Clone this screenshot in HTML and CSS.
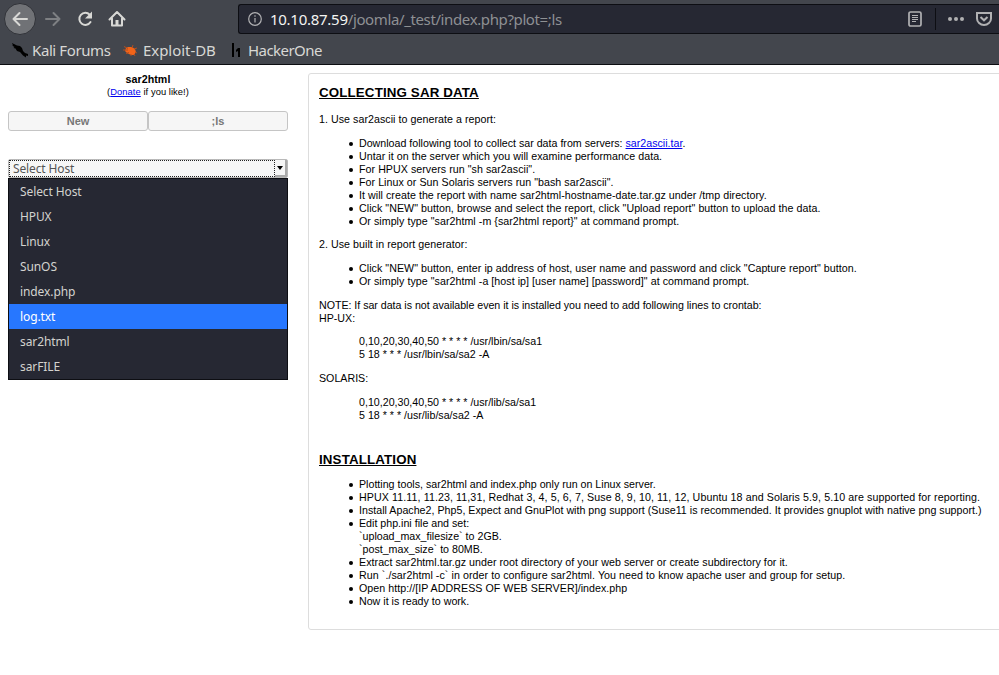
FILE: index.html
```html
<!DOCTYPE html>
<html lang="en">
<head>
<meta charset="utf-8">
<title>sar2html</title>
<link rel="stylesheet" href="styles.css">
</head>
<body>
<header class="browser">
  <div class="toolbar">
    <nav class="nav">
      <span class="back"><svg width="18" height="18" viewBox="0 0 18 18"><path d="M16 9H2.500M8.500 3L2.500 9l6 6"/></svg></span>
      <svg class="forward" width="18" height="18" viewBox="0 0 18 18"><path d="M2 9h13.500M9.500 3l6 6-6 6"/></svg>
      <svg class="reload" width="18" height="18" viewBox="0 0 18 18"><path d="M13.700 4.700A6 6 0 1 0 14.500 12"/><path class="solid" d="M16 1.500v7H9z"/></svg>
      <svg class="home" width="18" height="18" viewBox="0 0 18 18"><path d="M1.500 9.500L9 2l7.500 7.500M4 8.500v7h10v-7"/><path class="solid" d="M7.500 10h3v6h-3z"/></svg>
    </nav>
    <div class="address">
      <svg class="info" width="16" height="16" viewBox="0 0 16 16"><circle cx="8" cy="8" r="6.300"/><path d="M8 7v4.500M8 4.200v1.600"/></svg>
      <span class="url"><b>10.10.87.59</b>/joomla/_test/index.php?plot=;ls</span>
      <svg class="reader" width="16" height="18" viewBox="0 0 16 18"><rect x="2" y="2" width="12" height="14" rx="1.500"/><path d="M5 5.500h6M5 7.500h6M5 9.500h6M5 11.500h4"/></svg>
      <i class="divider"></i>
      <svg class="dots" width="18" height="6" viewBox="0 0 18 6"><circle cx="3" cy="3" r="2"/><circle cx="9" cy="3" r="2"/><circle cx="15" cy="3" r="2"/></svg>
      <svg class="pocket" width="18" height="16" viewBox="0 0 18 16"><path d="M2 2h14v5.500a7 6.500 0 0 1-14 0z"/><path d="M5.500 6L9 9.300 12.500 6"/></svg>
    </div>
  </div>
  <div class="bookmarks">
    <span class="mark"><svg width="18" height="18" viewBox="0 0 18 18"><path d="M1 2l5 2.500 3 .5 2 2 1 3 2 2 3 1v2l-2-.5v2l-3-2-3-3.500-3-1-1.500-2.500-2-.5 1-1-2.500-1.500h1z" fill="#000"/></svg>Kali Forums</span>
    <span class="mark exploit"><svg width="16" height="14" viewBox="0 0 16 14"><path d="M3 5l2-1 4 0 3 2 1 3-2 3-3 0-4-2-2-2z" fill="#f26419"/><path d="M1 3.500l4 2M0 7h5M3 10.500l3-1M9 5l1-3M11 6l3-1M12 9l2 1M8 11l0 2M11 11l1 2" stroke="#b34e20"/></svg>Exploit-DB</span>
    <span class="mark hacker"><svg width="10" height="16" viewBox="0 0 10 16"><path d="M0 1h2v14H0zM6 6h2v9H6V9L4 10V8z" fill="#000"/></svg>HackerOne</span>
  </div>
</header>
<main class="page">
  <aside class="side">
    <div class="brand">sar2html</div>
    <div class="donate">(<a href="#">Donate</a> if you like!)</div>
    <div class="buttons"><button>New</button><button>;ls</button></div>
    <div class="select"><span class="value">Select Host</span><span class="arrow"></span></div>
    <ul class="menu">
      <li>Select Host</li><li>HPUX</li><li>Linux</li><li>SunOS</li><li>index.php</li><li class="active">log.txt</li><li>sar2html</li><li>sarFILE</li>
    </ul>
  </aside>
  <section class="content">
    <h2>COLLECTING SAR DATA</h2>
    <p class="loose">1. Use sar2ascii to generate a report:</p>
    <ul>
      <li>Download following tool to collect sar data from servers: <a href="#">sar2ascii.tar</a>.</li>
      <li class="loose">Untar it on the server which you will examine performance data.</li>
      <li class="loose">For HPUX servers run "sh sar2ascii".</li>
      <li class="loose">For Linux or Sun Solaris servers run "bash sar2ascii".</li>
      <li class="loose">It will create the report with name sar2html-hostname-date.tar.gz under /tmp directory.</li>
      <li class="loose">Click "NEW" button, browse and select the report, click "Upload report" button to upload the data.</li>
      <li class="loose">Or simply type "sar2html -m {sar2html report}" at command prompt.</li>
    </ul>
    <p class="loose">2. Use built in report generator:</p>
    <ul class="second">
      <li class="loose">Click "NEW" button, enter ip address of host, user name and password and click "Capture report" button.</li>
      <li class="loose">Or simply type "sar2html -a [host ip] [user name] [password]" at command prompt.</li>
    </ul>
    <p class="note"><span class="tight">NOTE: If sar data is not available even it is installed you need to add following lines to crontab:</span><br>HP-UX:</p>
    <blockquote>0,10,20,30,40,50 * * * * /usr/lbin/sa/sa1<br>5 18 * * * /usr/lbin/sa/sa2 -A</blockquote>
    <p>SOLARIS:</p>
    <blockquote class="solaris">0,10,20,30,40,50 * * * * /usr/lib/sa/sa1<br>5 18 * * * /usr/lib/sa/sa2 -A</blockquote>
    <h2 class="install">INSTALLATION</h2>
    <ul>
      <li>Plotting tools, sar2html and index.php only run on Linux server.</li>
      <li class="looser">HPUX 11.11, 11.23, 11,31, Redhat 3, 4, 5, 6, 7, Suse 8, 9, 10, 11, 12, Ubuntu 18 and Solaris 5.9, 5.10 are supported for reporting.</li>
      <li class="slight">Install Apache2, Php5, Expect and GnuPlot with png support (Suse11 is recommended. It provides gnuplot with native png support.)</li>
      <li>Edit php.ini file and set:<br>`upload_max_filesize` to 2GB.<br>`post_max_size` to 80MB.</li>
      <li class="loose">Extract sar2html.tar.gz under root directory of your web server or create subdirectory for it.</li>
      <li class="run">Run `./sar2html -c` in order to configure sar2html. You need to know apache user and group for setup.</li>
      <li class="loose">Open http://[IP ADDRESS OF WEB SERVER]/index.php</li>
      <li>Now it is ready to work.</li>
    </ul>
  </section>
</main>
</body>
</html>
```
FILE: styles.css
```css
* { box-sizing: border-box; }
body { margin: 0; background: #fff; color: #000; font: 10.67px/13px "Liberation Sans", Arial, sans-serif; overflow: hidden; }
svg { display: block; flex: none; fill: none; }
a { color: #0000ee; }

.browser { height: 65px; background: #43464d; border-bottom: 1px solid #0c0d11; font-family: "Noto Sans", sans-serif; }
.toolbar { display: flex; height: 38px; padding-top: 4px; }
.nav { display: flex; align-items: center; width: 238px; height: 30px; padding-left: 4px; }
.nav svg { stroke: #d8d8d5; stroke-width: 2; stroke-linecap: round; stroke-linejoin: round; }
.nav .solid { fill: #d8d8d5; stroke: none; }
.back { display: grid; place-items: center; width: 32px; height: 32px; border: 1px solid #303238; border-radius: 50%; background: #707276; }
.nav .forward { margin-left: 8px; stroke: #7e8083; }
.reload { margin-left: 14px; }
.home { margin-left: 14px; }
.address { display: flex; align-items: center; flex: 1; height: 30px; padding-left: 8px; border: 1px solid #0d0e13; border-right: 0; border-radius: 3px 0 0 3px; background: #262833; }
.address svg { stroke: #b1b1b3; stroke-width: 2; }
.address .info { stroke-width: 1.2; }
.url { width: 637px; margin-left: 7px; color: #8e9093; font-size: 15px; line-height: 20px; letter-spacing: -.38px; white-space: nowrap; }
.url b { color: #f4f4f2; font-weight: 400; letter-spacing: -.27px; }
.address .reader { stroke-width: 1.7; }
.address .reader path { stroke-width: 1; }
.divider { width: 1px; height: 22px; margin-left: 12px; background: #0d0e13; }
.address .dots { margin-left: 11px; fill: #b1b1b3; stroke: none; }
.pocket { margin-left: 10px; }
.bookmarks { display: flex; height: 26px; padding-left: 11px; color: #d8d8d5; font-size: 15px; line-height: 24px; }
.mark { display: flex; align-items: center; gap: 3px; width: 112px; height: 24px; white-space: nowrap; letter-spacing: -.4px; }
.exploit { gap: 4px; width: 109px; letter-spacing: -.05px; }
.hacker { gap: 6px; letter-spacing: -.55px; }

.page { display: flex; }
.side { width: 288px; flex: none; margin-right: 20px; padding: 8px 0 0 8px; }
.brand { text-align: center; font-size: 10.67px; font-weight: 700; letter-spacing: .05px; }
.donate { text-align: center; font-size: 9.33px; line-height: 12px; letter-spacing: .07px; }
.buttons { display: flex; margin-top: 13px; }
.buttons button { width: 140px; height: 20px; padding: 0; border: 1px solid #c5c5c5; border-radius: 3px; background: #f6f6f6; color: #777; font: 700 11px/18px "Liberation Sans", sans-serif; }
.select { display: flex; width: 280px; height: 19px; margin-top: 28px; border: 1px solid #b9b9b9; border-radius: 2px; background: #f6f6f6; font-family: "Noto Sans", sans-serif; color: #555; }
.value { flex: 1; padding-left: 3px; border: 1px dotted #222; font-size: 12px; line-height: 16px; letter-spacing: -.13px; }
.arrow { display: grid; place-items: center; width: 12px; border: solid #aaa; border-width: 0 2px 2px 0; }
.arrow::before { content: ""; border: solid transparent; border-width: 4px 3.5px 0; border-top-color: #000; }
.menu { width: 280px; height: 202px; margin: 0; padding: 0; border: 1px solid #0d0e13; background: #262833; color: #d3d3cf; list-style: none; font: 12px/26px "Noto Sans", sans-serif; letter-spacing: -.1px; }
.menu li { height: 25px; padding-left: 11px; }
.menu .active { background: #2777ff; color: #fff; }

.content { flex: none; width: 720px; height: 557px; margin-top: 8px; padding: 11px 10px; border: 1px solid #ddd; border-radius: 3px; white-space: nowrap; }
.content h2 { margin: 0 0 13px; font-size: 13.33px; line-height: 15px; text-decoration: underline; letter-spacing: .14px; }
.content .install { margin-bottom: 11px; }
.content p { margin: 0 0 11px; }
.content ul { margin: 0 0 10px; padding-left: 40px; list-style: none; }
.content li::before { content: ""; float: left; width: 4px; height: 4px; margin: 5px 0 0 -10px; border-radius: 50%; background: #000; }
.content .second { margin-bottom: 11px; }
.content .note { margin-bottom: 10px; }
.content .tight { letter-spacing: -.03px; }
.content .slight { letter-spacing: .015px; }
.content .loose { letter-spacing: .045px; }
.content .run { letter-spacing: .065px; }
.content .looser { letter-spacing: .09px; }
.content blockquote { margin: 0 40px 11px; }
.content .solaris { margin-bottom: 30px; }
```
